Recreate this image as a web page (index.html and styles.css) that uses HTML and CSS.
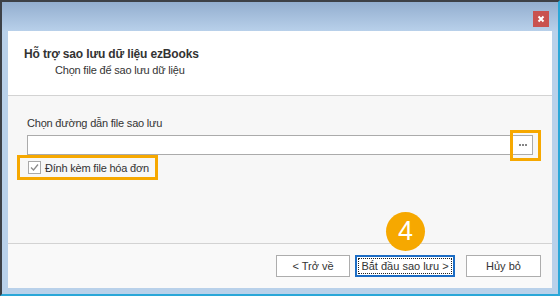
FILE: index.html
```html
<!DOCTYPE html>
<html lang="vi">
<head>
    <meta charset="UTF-8">
    <meta name="viewport" content="width=device-width, initial-scale=1.0">
    <title>Hỗ trợ sao lưu dữ liệu ezBooks</title>
    <link rel="stylesheet" href="styles.css">
</head>
<body>
    <div class="window">
        <div class="titlebar">
            <button class="close" type="button">
                <svg width="16" height="16" viewBox="0 0 16 16">
                    <path d="M5.5 5.5 L10.5 10.5 M10.5 5.5 L5.5 10.5" stroke="#ffffff" stroke-width="2" fill="none"/>
                </svg>
            </button>
        </div>
        <div class="frame">
            <div class="panel">
                <header class="wizard-header">
                    <h1>Hỗ trợ sao lưu dữ liệu ezBooks</h1>
                    <p>Chọn file để sao lưu dữ liệu</p>
                </header>
                <main class="wizard-body">
                    <div class="field-label">Chọn đường dẫn file sao lưu</div>
                    <div class="path-row">
                        <div class="path-input">
                            <input type="text">
                            <button class="browse" type="button"><i></i><i></i><i></i></button>
                        </div>
                        <span class="mark mark-browse"></span>
                    </div>
                    <label class="attach">
                        <span class="check">
                            <svg width="11" height="11" viewBox="0 0 11 11">
                                <path d="M2 5.5 L4.5 8 L9 2.5" stroke="#8a8a8a" stroke-width="1.3" fill="none"/>
                            </svg>
                        </span>
                        Đính kèm file hóa đơn
                    </label>
                </main>
                <footer class="wizard-footer">
                    <button class="btn btn-back" type="button">&lt; Trở về</button>
                    <button class="btn btn-next" type="button">Bắt đầu sao lưu &gt;</button>
                    <button class="btn btn-cancel" type="button">Hủy bỏ</button>
                </footer>
                <span class="step-badge">4</span>
            </div>
        </div>
    </div>
</body>
</html>
```

FILE: styles.css
```css
/* Estilos generales */
body {
    margin: 0;
    padding: 0;
    font-family: 'Liberation Sans', Arial, sans-serif;
    font-size: 11px;
    letter-spacing: -0.2px;
    color: #333333;
    background-color: #ffffff;
}

.window {
    width: 560px;
    height: 296px;
    box-sizing: border-box;
    border-left: 2px solid #3d4147;
    border-top: 2px solid #3d4147;
    border-right: 2px solid #2aa7d8;
    border-bottom: 2px solid #2aa7d8;
    display: flex;
    flex-direction: column;
}

/* Barra de titulo */
.titlebar {
    height: 29px;
    display: flex;
    justify-content: flex-end;
    align-items: flex-end;
    padding: 0 9px 4px 0;
    box-sizing: border-box;
    background: linear-gradient(#93aecf, #b8d0ea);
}

.close {
    width: 16px;
    height: 16px;
    padding: 0;
    border: none;
    background-color: #c9524f;
    display: flex;
}

.frame {
    flex: 1;
    padding: 0 6px 6px 6px;
    background-color: #b9d1ea;
    display: flex;
}

.panel {
    flex: 1;
    position: relative;
    display: flex;
    flex-direction: column;
    background-color: #f7f7f7;
}

/* Encabezado */
.wizard-header {
    height: 65px;
    box-sizing: border-box;
    padding: 16px 16px 0 16px;
    background-color: #ffffff;
    border-bottom: 1px solid #d3d3d3;
}

.wizard-header h1 {
    margin: 0;
    font-size: 12px;
    line-height: 14px;
    letter-spacing: -0.15px;
    font-weight: bold;
    color: #333333;
}

.wizard-header p {
    margin: 2px 0 0 31px;
    line-height: 14px;
}

/* Contenido */
.wizard-body {
    flex: 1;
    padding: 20px 19px 0 19px;
}

.field-label {
    line-height: 14px;
    margin-bottom: 5px;
}

.path-row {
    position: relative;
}

.path-input {
    height: 20px;
    width: 506px;
    box-sizing: border-box;
    border: 1px solid #ababab;
    background-color: #ffffff;
    display: flex;
}

.path-input input {
    flex: 1;
    border: none;
    padding: 0 4px;
    outline: none;
    font: inherit;
}

.browse {
    width: 20px;
    padding: 0 0 0 1px;
    border: none;
    background-color: #ffffff;
    display: flex;
    align-items: center;
    justify-content: center;
    gap: 1px;
}

.browse i {
    width: 2px;
    height: 2px;
    background-color: #858585;
}

.mark {
    position: absolute;
    box-sizing: border-box;
    border: 3px solid #f6a800;
}

.mark-browse {
    left: 483px;
    top: -5px;
    width: 31px;
    height: 31px;
}

.attach {
    width: 141px;
    height: 25px;
    box-sizing: border-box;
    margin: 0 0 0 -10px;
    padding: 0 0 0 8px;
    border: 3px solid #f6a800;
    display: flex;
    align-items: center;
    gap: 4px;
}

.check {
    width: 13px;
    height: 13px;
    box-sizing: border-box;
    border: 1px solid #a9a9a9;
    background-color: #ffffff;
    display: flex;
    align-items: center;
    justify-content: center;
}

/* Pie */
.wizard-footer {
    height: 45px;
    box-sizing: border-box;
    border-top: 1px solid #d3d3d3;
    padding: 11px 11px 0 0;
    background-color: #f9f9f9;
    display: flex;
    justify-content: flex-end;
    align-items: flex-start;
}

.btn {
    height: 22px;
    padding: 0;
    font: inherit;
    letter-spacing: 0;
    color: #333333;
    background-color: #ffffff;
    border: 1px solid #adadad;
}

.btn-back {
    width: 74px;
}

.btn-next {
    width: 100px;
    margin-left: 5px;
    border: 2px solid #1b6cc4;
    outline: 1px dotted #222222;
    outline-offset: -4px;
}

.btn-cancel {
    width: 75px;
    margin-left: 11px;
}

.step-badge {
    position: absolute;
    left: 378px;
    top: 181px;
    width: 39px;
    height: 39px;
    border-radius: 50%;
    background-color: #f6a800;
    color: #ffffff;
    font-size: 27px;
    line-height: 39px;
    text-align: center;
}
```
